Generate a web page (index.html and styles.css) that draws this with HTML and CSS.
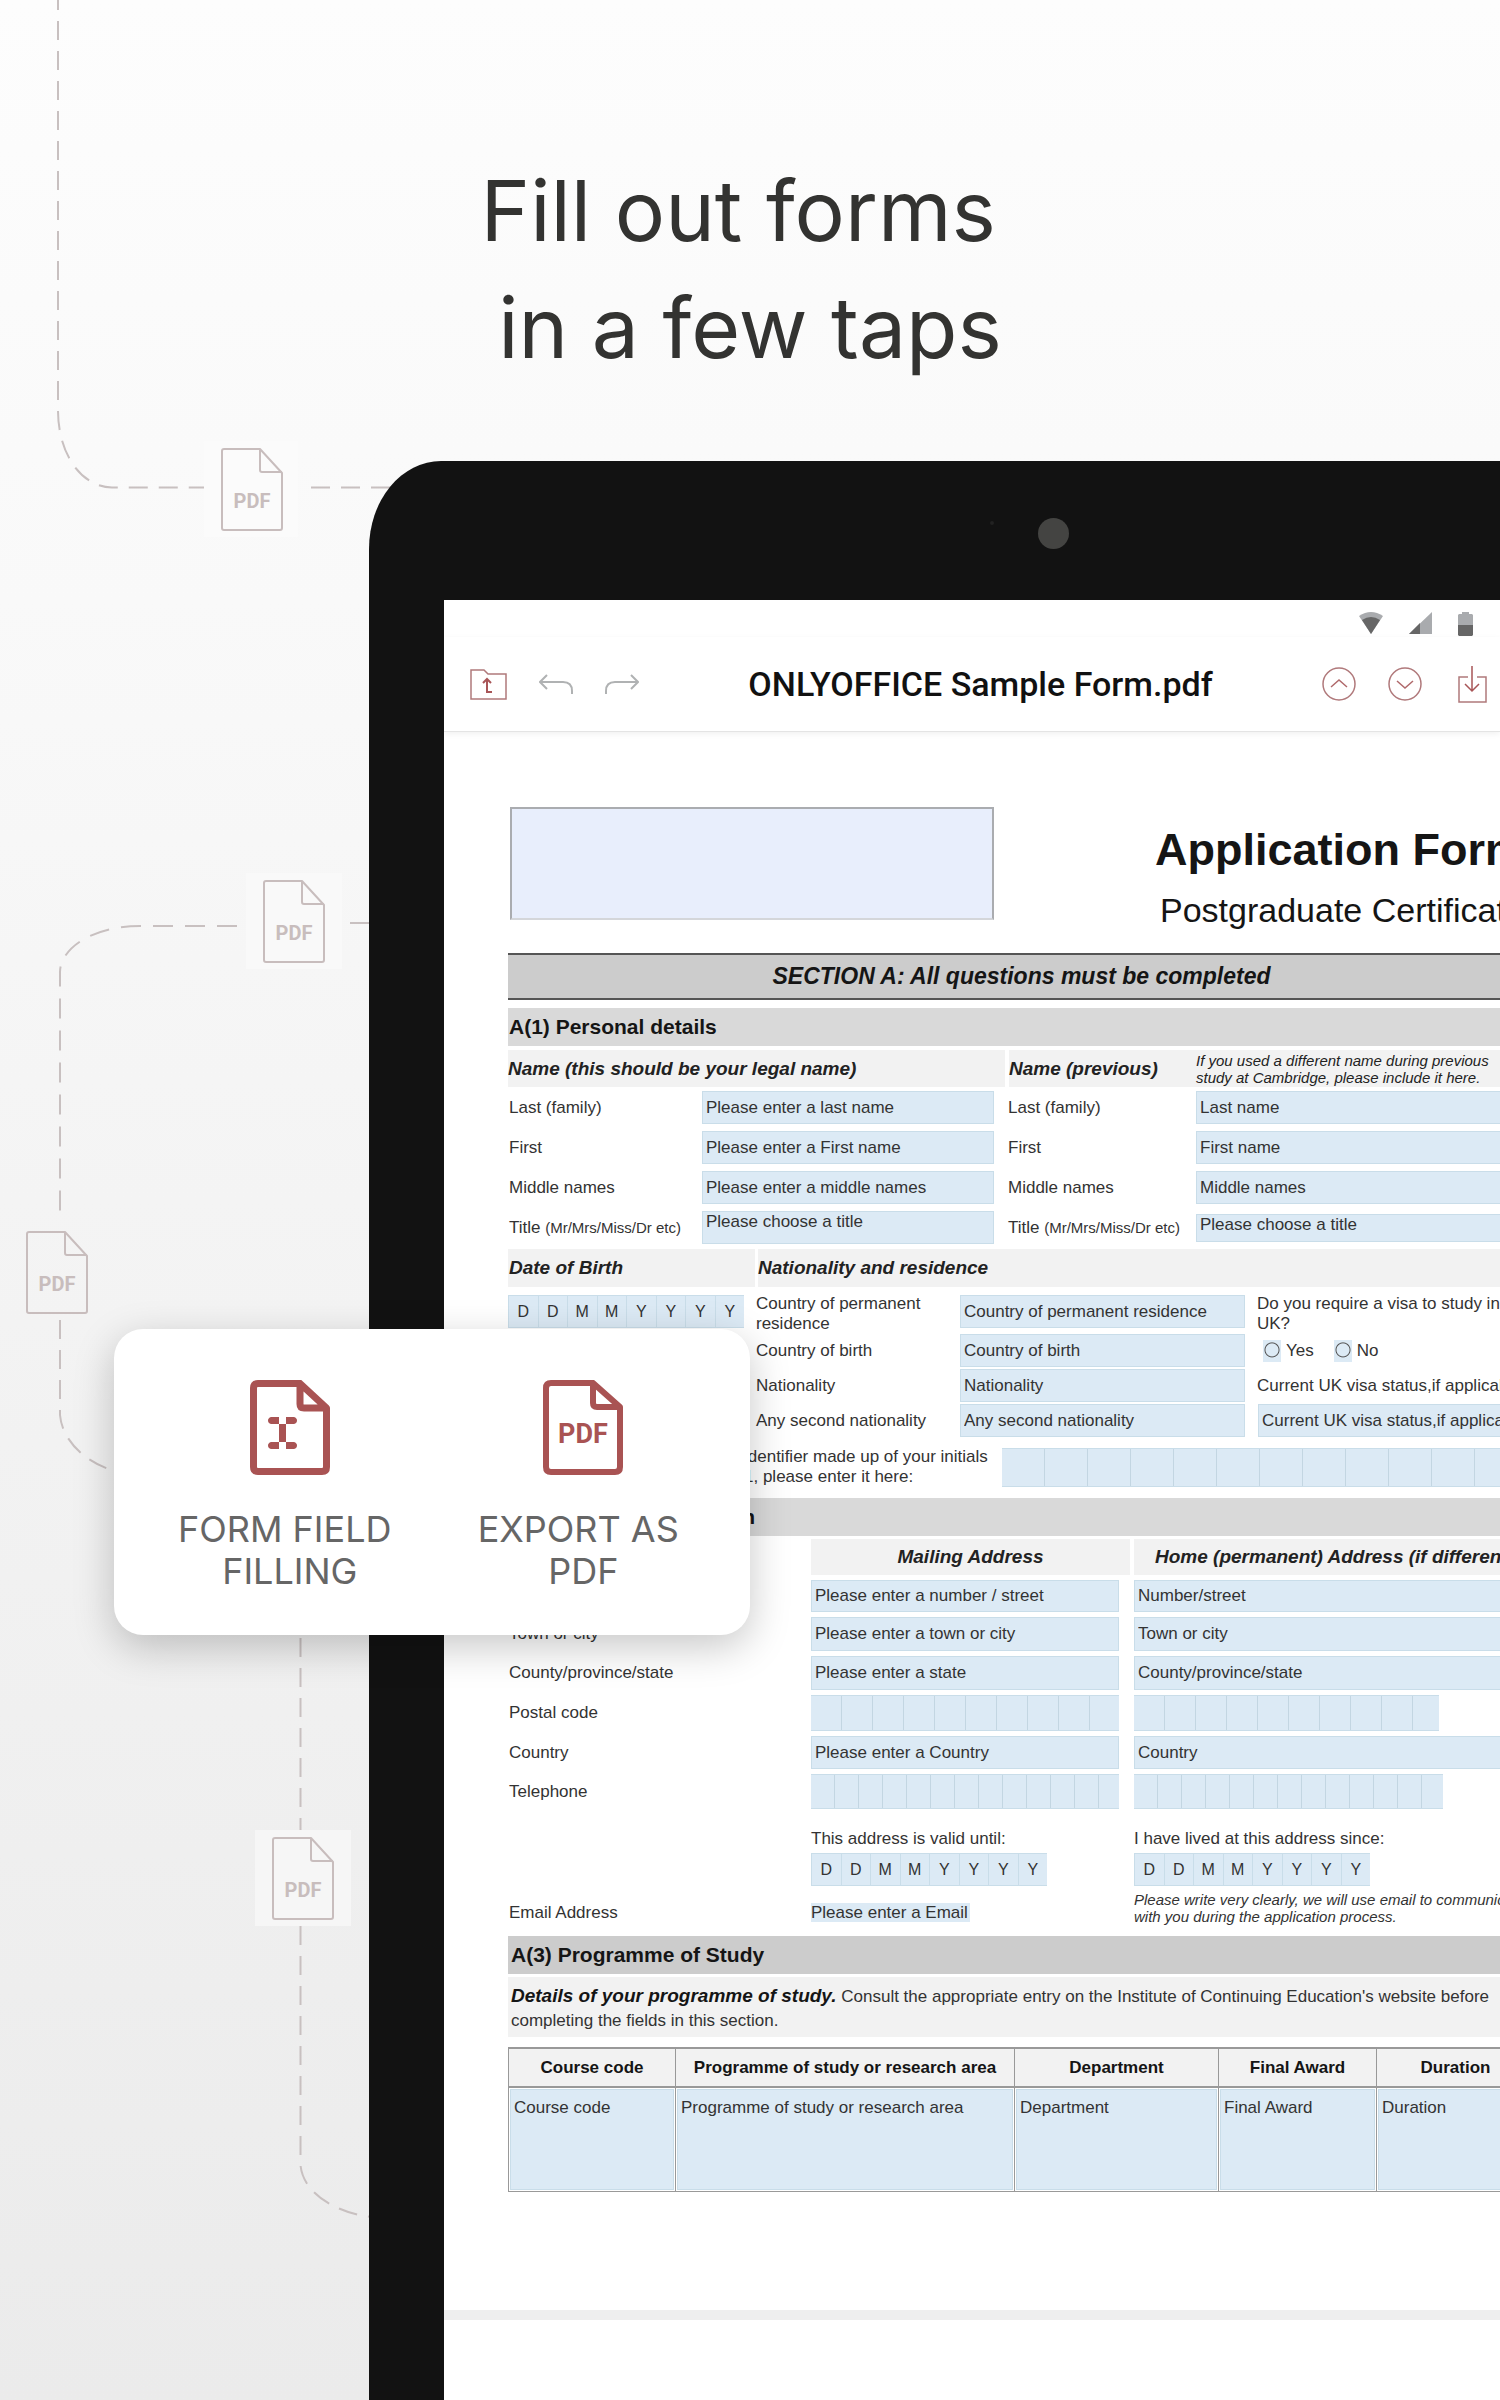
FILE: index.html
```html
<!DOCTYPE html>
<html lang="en">
<head>
<meta charset="utf-8">
<meta name="viewport" content="width=device-width, initial-scale=1">
<title>Fill out forms in a few taps</title>
<link rel="stylesheet" href="styles.css">
</head>
<body>
<main class="promo">
  <svg class="trail" viewBox="0 0 369 2400" width="369" height="2400" aria-hidden="true">
    <defs>
      <symbol id="pdf-file" viewBox="0 0 64 84" overflow="visible">
        <path d="M40 1H4Q2 1 2 3V80Q2 82 4 82H60Q62 82 62 80V25L40 1V22Q40 24 42 24H62" fill="none" stroke="#c8bdbd" stroke-width="2" stroke-linejoin="round"/>
        <text x="32" y="60" text-anchor="middle" class="trail-text">PDF</text>
      </symbol>
    </defs>
    <g fill="none" stroke="#c8c0c0" stroke-width="2" stroke-dasharray="19 11">
      <path d="M58 -9V410C58 455 82 487 112 487.500H204"/>
      <path d="M311 487.500H400"/>
      <path d="M237 926H140C90 926 60 950 60 972V1222" stroke-dasharray="20 12"/>
      <path d="M350 923H369"/>
      <path d="M60 1320V1415C62 1440 85 1462 112 1470"/>
      <path d="M300.500 1638V1830"/>
      <path d="M300.500 1926V2165C303 2195 340 2214 372 2217"/>
    </g>
    <rect x="204" y="441" width="94" height="96" fill="#fbfbfb"/>
    <rect x="246" y="873" width="96" height="96" fill="#f9f9f9"/>
    <rect x="255" y="1830" width="96" height="96" fill="#f6f6f6"/>
    <use href="#pdf-file" x="220" y="448" width="64" height="84"/>
    <use href="#pdf-file" x="262" y="880" width="64" height="84"/>
    <use href="#pdf-file" x="25" y="1231" width="64" height="84"/>
    <use href="#pdf-file" x="271" y="1837" width="64" height="84"/>
  </svg>

  <h1 class="headline">Fill out forms&nbsp;<br>in a few taps</h1>

  <section class="tablet">
    <div class="bezel"><span class="sensor"></span><span class="camera"></span></div>
    <div class="screen">
      <div class="status">
        <svg width="24" height="22" viewBox="0 0 24 22"><path d="M0 4Q12-4 24 4L12 22Z" fill="#a9abae"/><path d="M3 8Q12 2 21 8L12 22Z" fill="#666"/></svg>
        <svg width="23" height="22" viewBox="0 0 23 22"><path d="M23 0V22H0Z" fill="#a9abae"/><path d="M11 11V22H0Z" fill="#666"/></svg>
        <svg width="15" height="24" viewBox="0 0 15 24"><path d="M1 2H4V0H11V2H14L15 3V13H0V3Z" fill="#a9abae"/><path d="M0 13H15V23L14 24H1L0 23Z" fill="#666"/></svg>
      </div>
      <header class="appbar">
        <button type="button" aria-label="Back to folder"><svg width="37" height="31" viewBox="0 0 37 31"><path d="M1 30V1H14L18 5H36V30Z" stroke="#b0797b"/><path d="M17 10V23H22M13 14L17 10L21 14" stroke="#a85557" stroke-width="2"/></svg></button>
        <button type="button" aria-label="Undo"><svg width="34" height="21" viewBox="0 0 34 21"><path d="M8 1L1 8L8 15M1 8H24Q33 8 33 17V20" stroke="#b0b2b3" stroke-width="2"/></svg></button>
        <button type="button" aria-label="Redo"><svg width="34" height="21" viewBox="0 0 34 21"><path d="M26 1L33 8L26 15M33 8H10Q1 8 1 17V20" stroke="#b0b2b3" stroke-width="2"/></svg></button>
        <h2 class="filename">ONLYOFFICE Sample Form.pdf</h2>
        <button type="button" aria-label="Previous field"><svg width="34" height="34" viewBox="0 0 34 34"><circle cx="17" cy="17" r="16" stroke="#b0797b"/><path d="M9 20L17 13L25 20" stroke="#b0696b"/></svg></button>
        <button type="button" aria-label="Next field"><svg width="34" height="34" viewBox="0 0 34 34"><circle cx="17" cy="17" r="16" stroke="#b0797b"/><path d="M9 14L17 21L25 14" stroke="#b0696b"/></svg></button>
        <button type="button" aria-label="Save" class="save"><svg width="29" height="37" viewBox="0 0 29 37"><path d="M10 11H1V36H28V11H19" stroke="#b0797b"/><path d="M14 0V25M7 18L14 25L21 18" stroke="#a85557"/></svg></button>
      </header>

      <form class="sheet">
        <div class="masthead">
          <div class="logo-slot"></div>
          <div class="doc-title">
            <h3>Application Form</h3>
            <p>Postgraduate Certificate</p>
          </div>
        </div>

        <h4 class="section">SECTION A: All questions must be completed</h4>

        <h5 class="part">A(1) Personal details</h5>
        <div class="names-head">
          <b class="sub">Name (this should be your legal name)</b>
          <div class="sub sub-note"><b>Name (previous)</b><i class="note">If you used a different name during previous<br>study at Cambridge, please include it here.</i></div>
        </div>
        <div class="names">
          <label for="n1">Last (family)</label><input id="n1" value="Please enter a last name">
          <label for="p1" class="second">Last (family)</label><input id="p1" value="Last name">
          <label for="n2">First</label><input id="n2" value="Please enter a First name">
          <label for="p2" class="second">First</label><input id="p2" value="First name">
          <label for="n3">Middle names</label><input id="n3" value="Please enter a middle names">
          <label for="p3" class="second">Middle names</label><input id="p3" value="Middle names">
          <label for="n4">Title <small>(Mr/Mrs/Miss/Dr etc)</small></label><select id="n4"><option>Please choose a title</option></select>
          <label for="p4" class="second">Title <small>(Mr/Mrs/Miss/Dr etc)</small></label><select id="p4" class="short"><option>Please choose a title</option></select>
        </div>

        <div class="birth-head"><b class="sub">Date of Birth</b><b class="sub">Nationality and residence</b></div>
        <div class="residence">
          <div class="date" role="group" aria-label="Date of birth">
            <input aria-label="Day" value="D"><input aria-label="Day" value="D"><input aria-label="Month" value="M"><input aria-label="Month" value="M"><input aria-label="Year" value="Y"><input aria-label="Year" value="Y"><input aria-label="Year" value="Y"><input aria-label="Year" value="Y">
          </div>
          <label for="r1" class="c2">Country of permanent<br>residence</label><input id="r1" value="Country of permanent residence">
          <p class="c4">Do you require a visa to study in the<br>UK?</p>
          <label for="r2" class="c2">Country of birth</label><input id="r2" value="Country of birth">
          <div class="c4 radios"><input type="radio" name="visa" id="yes"><label for="yes">Yes</label><input type="radio" name="visa" id="no"><label for="no">No</label></div>
          <label for="r3" class="c2">Nationality</label><input id="r3" value="Nationality">
          <label for="r5" class="c4">Current UK visa status,if applicable</label>
          <label for="r4" class="c2">Any second nationality</label><input id="r4" value="Any second nationality">
          <input id="r5" class="c4" value="Current UK visa status,if applicable">
        </div>
        <div class="ident">
          <label for="crs">identifier made up of your initials<br>1, please enter it here:</label><input id="crs" class="comb comb-wide">
        </div>

        <h5 class="part">A(2) Contact information</h5>
        <div class="address-head"><b class="sub">Mailing Address</b><b class="sub">Home (permanent) Address (if different)</b></div>
        <div class="address">
          <label for="a1">Number/street</label><input id="a1" value="Please enter a number / street"><input aria-label="Home street" class="home" value="Number/street">
          <label for="a2">Town or city</label><input id="a2" value="Please enter a town or city"><input aria-label="Home town" class="home" value="Town or city">
          <label for="a3">County/province/state</label><input id="a3" value="Please enter a state"><input aria-label="Home county" class="home" value="County/province/state">
          <label for="a4">Postal code</label><input id="a4" class="comb comb-post"><input aria-label="Home postal code" class="home comb comb-post">
          <label for="a5">Country</label><input id="a5" value="Please enter a Country"><input aria-label="Home country" class="home" value="Country">
          <label for="a6">Telephone</label><input id="a6" class="comb comb-tel"><input aria-label="Home telephone" class="home comb comb-tel">
        </div>
        <div class="dates">
          <div class="c2"><p>This address is valid until:</p>
            <div class="date" role="group" aria-label="Valid until">
              <input aria-label="Day" value="D"><input aria-label="Day" value="D"><input aria-label="Month" value="M"><input aria-label="Month" value="M"><input aria-label="Year" value="Y"><input aria-label="Year" value="Y"><input aria-label="Year" value="Y"><input aria-label="Year" value="Y">
            </div></div>
          <div class="home"><p>I have lived at this address since:</p>
            <div class="date" role="group" aria-label="Lived here since">
              <input aria-label="Day" value="D"><input aria-label="Day" value="D"><input aria-label="Month" value="M"><input aria-label="Month" value="M"><input aria-label="Year" value="Y"><input aria-label="Year" value="Y"><input aria-label="Year" value="Y"><input aria-label="Year" value="Y">
            </div></div>
          <label for="em" class="mail">Email Address</label><input id="em" class="mail mail-box" value="Please enter a Email">
          <i class="note home">Please write very clearly, we will use email to communicate<br>with you during the application process.</i>
        </div>

        <h5 class="part part-dark">A(3) Programme of Study</h5>
        <p class="details"><b>Details of your programme of study.</b> Consult the appropriate entry on the Institute of Continuing Education's website before<br>completing the fields in this section.</p>
        <table class="courses">
          <colgroup><col class="w1"><col class="w2"><col class="w3"><col class="w4"><col></colgroup>
          <thead><tr><th>Course code</th><th>Programme of study or research area</th><th>Department</th><th>Final Award</th><th>Duration</th></tr></thead>
          <tbody><tr>
            <td><textarea aria-label="Course code">Course code</textarea></td>
            <td><textarea aria-label="Programme">Programme of study or research area</textarea></td>
            <td><textarea aria-label="Department">Department</textarea></td>
            <td><textarea aria-label="Final award">Final Award</textarea></td>
            <td><textarea aria-label="Duration">Duration</textarea></td>
          </tr></tbody>
        </table>
      </form>
      <div class="page-gap"></div>
    </div>
  </section>

  <aside class="card">
    <div class="feature">
      <svg width="80" height="95" viewBox="0 0 80 95" aria-hidden="true">
        <path d="M50 3.500H8Q3.500 3.500 3.500 8V87Q3.500 91.500 8 91.500H72Q76.500 91.500 76.500 87V28L50 3.500V24Q50 28 54 28H76" fill="none" stroke="#a95353" stroke-width="7" stroke-linejoin="round"/>
        <path d="M21 37H29V44H21Q18 43 18 40.500T21 37ZM36 37H44Q47 38 47 40.500T44 44H36ZM29 44H36V62H29ZM21 62H29V69H21Q18 68 18 65.500T21 62ZM36 62H44Q47 63 47 65.500T44 69H36Z" fill="#a95353"/>
      </svg>
      <p>FORM FIELD&nbsp;<br>FILLING</p>
    </div>
    <div class="feature">
      <svg width="80" height="95" viewBox="0 0 80 95" aria-hidden="true">
        <path d="M50 3H8Q3 3 3 8V87Q3 92 8 92H72Q77 92 77 87V27L50 3V23Q50 27 54 27H76" fill="none" stroke="#a95353" stroke-width="6" stroke-linejoin="round"/>
        <text x="40" y="63" text-anchor="middle" class="pdf-text">PDF</text>
      </svg>
      <p>EXPORT AS&nbsp;<br>PDF</p>
    </div>
  </aside>
</main>
</body>
</html>
```
FILE: styles.css
```css
* { box-sizing: border-box; }
body, h1, h2, h3, h4, h5, p { margin: 0; }
body { font-family: "Liberation Sans", Arial, sans-serif; color: #111; }

.promo {
  position: relative;
  display: flex;
  flex-direction: column;
  min-height: 100vh;
  overflow: hidden;
  background: linear-gradient(#fdfdfd, #f9f9f9 25%, #f2f2f2 60%, #ebebeb);
}
.trail { position: absolute; left: 0; top: 0; overflow: visible; }
.trail-text { font: 700 20px Roboto, sans-serif; fill: #c8bdbd; }
.headline {
  position: relative;
  padding: 152px 0 75px;
  font: 400 84px/117px Inter, sans-serif;
  color: #333331;
  text-align: center;
}

/* Tablet */
.tablet {
  position: relative;
  flex: 1;
  display: flex;
  flex-direction: column;
  margin-left: 369px;
  padding-left: 75px;
  background: #121212;
  border-radius: 72px 0 0 0 / 88px 0 0 0;
}
.bezel { display: flex; gap: 44px; height: 139px; padding: 57px 0 0 546px; }
.sensor { width: 4px; height: 4px; margin-top: 3px; border-radius: 50%; background: #222; }
.camera { width: 31px; height: 31px; border-radius: 50%; background: #444442; }
.screen { flex: 1; background: #fff; overflow: hidden; }
.status { display: flex; justify-content: flex-end; gap: 26px; height: 37px; padding: 12px 27px 0 0; }
.appbar {
  display: flex;
  align-items: center;
  gap: 32px;
  height: 95px;
  padding: 0 13px 0 26px;
  border-bottom: 1px solid #e4e4e4;
  box-shadow: 0 2px 6px rgba(0, 0, 0, .06);
}
.appbar button { display: flex; padding: 0; border: 0; background: none; }
.appbar .save { padding-left: 4px; }
.appbar svg { fill: none; stroke-width: 1.5; }
.filename { flex: 1; font: 500 34px/40px Roboto, sans-serif; text-align: center; white-space: nowrap; }

/* Form sheet */
.sheet { margin-right: -98px; padding: 75px 63px 118px 64px; font-size: 17px; line-height: 20px; color: #333; }
.masthead { display: flex; gap: 152px; margin-bottom: 23px; }
.logo-slot { width: 484px; height: 113px; margin-left: 2px; border: 2px solid #aaacb0; border-bottom-color: #d4d6da; background: #e8eefc; }
.doc-title { flex: 1; padding: 17px 0 0 9px; white-space: nowrap; color: #151515; }
.doc-title h3 { font-size: 45px; line-height: 52px; }
.doc-title p { padding: 14px 0 0 5px; font-size: 34px; line-height: 40px; }

.section {
  margin-bottom: 8px;
  border: solid #555;
  border-width: 2px 0;
  background: #ccc;
  font-size: 23px;
  line-height: 43px;
  font-style: italic;
  text-align: center;
  color: #151515;
}
.part { padding-left: 1px; background: #d9d9d9; font-size: 21px; line-height: 38px; color: #151515; }
.part-dark { padding-left: 3px; background: #ccc; }
.sub { background: #f2f2f2; font-size: 19px; font-style: italic; color: #222; }
.note { font-size: 15px; line-height: 17px; white-space: nowrap; }

.sheet input, .sheet select, .sheet textarea {
  width: 100%;
  min-width: 0;
  margin: 0;
  padding: 0 3px;
  border: 1px solid #c9dde9;
  border-radius: 0;
  background: #dceaf5;
  font: inherit;
  color: #333;
  appearance: none;
}

.names-head { display: grid; grid-template-columns: 497px 1fr; gap: 4px; margin: 4px 0; line-height: 37px; }
.sub-note { display: grid; grid-template-columns: 187px 1fr; align-items: center; }
.names { display: grid; grid-template-columns: 194px 292px 202px 1fr; grid-auto-rows: 33px; row-gap: 7px; align-items: center; margin-bottom: 5px; }
.names input, .names select { height: 33px; }
.names .short { height: 28px; }
.names select { padding-bottom: 11px; line-height: 20px; }
.names .short { padding-bottom: 6px; }
.names label { padding-left: 1px; white-space: nowrap; }
.names .second { padding-left: 14px; }
small { font-size: 15px; }

.birth-head { display: grid; grid-template-columns: 247px 1fr; gap: 3px; margin-bottom: 8px; line-height: 38px; }
.birth-head .sub:first-child { padding-left: 1px; }
.date { display: grid; grid-template-columns: repeat(8, 1fr); width: 236px; height: 33px; }
.sheet .date input { padding: 0; border-right-width: 0; text-align: center; font-size: 16px; }
.residence {
  display: grid;
  grid-template-columns: 248px 204px 285px 1fr;
  grid-template-rows: 37px 33px 33px 33px;
  row-gap: 2px;
  align-items: center;
  margin-bottom: 10px;
}
.residence > input, .residence .date { height: 33px; align-self: start; }
.residence .c2 { grid-column: 2; }
.residence p, .residence label { white-space: nowrap; }
.residence .c4 { grid-column: 4; width: auto; margin-left: 12px; }
.residence > input.c4 { margin-left: 13px; }
.radios { display: flex; align-items: center; gap: 5px; padding-left: 6px; }
.sheet .radios input { width: 18px; height: 22px; padding: 0; border: 0; background: radial-gradient(circle at 50% 45%, transparent 6px, #555 7px, transparent 8px) #dceaf5; }
.radios label + input { margin-left: 15px; }
.ident { display: grid; grid-template-columns: 258px 1fr; align-items: center; margin: 0 0 11px 236px; }
.ident label { white-space: nowrap; }
.ident input { height: 39px; }

.sheet .comb { border-left: 0; border-right: 0; }
.sheet .comb-wide { background: repeating-linear-gradient(90deg, #dceaf5 0 42px, #c3d6e2 42px 43px); }
.sheet .comb-post { background: repeating-linear-gradient(90deg, #dceaf5 0 30px, #c3d6e2 30px 31px); }
.sheet .comb-tel { background: repeating-linear-gradient(90deg, #dceaf5 0 23px, #c3d6e2 23px 24px); }

.address-head { display: grid; grid-template-columns: 319px 1fr; gap: 4px; margin: 3px 0 5px 303px; line-height: 36px; text-align: center; }
.address {
  display: grid;
  grid-template-columns: 303px 308px 1fr;
  grid-template-rows: 32px 34px 34px 36px 33px 35px;
  row-gap: 5px;
  align-items: center;
  margin-bottom: 20px;
}
.address label { padding-left: 1px; }
.address input { height: 100%; }
.address .home { width: auto; margin-left: 15px; }
.address .home.comb-post { width: 305px; }
.address .home.comb-tel { width: 309px; }
.dates { display: grid; grid-template-columns: 303px 323px 1fr; margin-bottom: 11px; row-gap: 5px; }
.dates .c2 { grid-column: 2; }
.dates .date { margin-top: 4px; }
.mail { margin-top: 12px; }
label.mail { padding-left: 1px; }
.sheet .mail-box { width: 159px; height: 19px; margin-top: 12px; padding: 0; border: 0; }

.details { margin: 3px 0 10px; padding: 7px 3px 4px; background: #f2f2f2; line-height: 24px; white-space: nowrap; }
.details b { font-size: 19px; font-style: italic; color: #151515; }
.courses { width: 100%; table-layout: fixed; border-collapse: collapse; }
.w1 { width: 167px; }
.w2 { width: 339px; }
.w3 { width: 204px; }
.w4 { width: 158px; }
.courses th, .courses td { padding: 0; border: 1px solid #999; white-space: nowrap; }
.courses th { height: 39px; border-width: 2px 1px; background: #f2f2f2; color: #151515; }
.courses td { padding: 1px; }
.sheet .courses textarea { display: block; height: 101px; padding: 8px 3px; resize: none; overflow: hidden; }
.page-gap { height: 10px; background: #eee; }

/* Feature card over the tablet edge */
.card {
  position: absolute;
  left: 114px;
  top: 1329px;
  display: flex;
  gap: 76px;
  padding: 51px 61px 43px 64px;
  border-radius: 29px;
  background: #fff;
  box-shadow: 0 12px 40px rgba(0, 0, 0, .22);
}
.feature { display: flex; flex-direction: column; align-items: center; gap: 33px; }
.feature p { font: 400 36px/42px Inter, sans-serif; text-align: center; color: #666; white-space: nowrap; }
.pdf-text { font: 700 27px Roboto, sans-serif; fill: #a95353; }
```
